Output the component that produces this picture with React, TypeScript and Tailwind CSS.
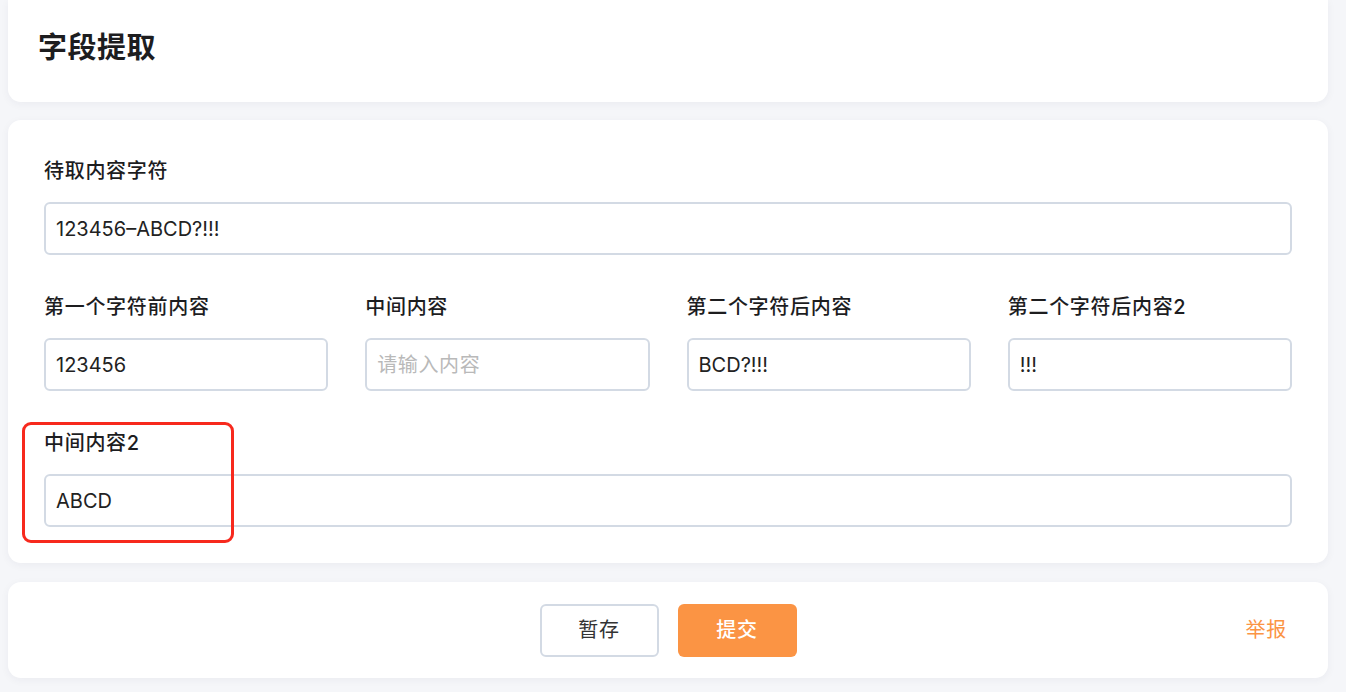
const FONT = "font-['Inter','Noto_Sans_CJK_SC',sans-serif]";

type Field = { label: string; value?: string; placeholder?: string };

const splitFields: Field[] = [
  { label: '第一个字符前内容', value: '123456' },
  { label: '中间内容', placeholder: '请输入内容' },
  { label: '第二个字符后内容', value: 'BCD?!!!' },
  { label: '第二个字符后内容2', value: '!!!' },
];

function FormField({ label, value, placeholder }: Field) {
  return (
    <div className="flex flex-col">
      <label className="h-[28px] text-[20px] leading-[28px] font-medium tracking-[0.7px] text-[#1d1d1f]">{label}</label>
      <input
        readOnly
        defaultValue={value}
        placeholder={placeholder}
        className="mt-[17px] h-[53px] w-full rounded-[6px] border-2 border-[#d3dae4] bg-white px-[10px] text-[20px] text-[#222] outline-none placeholder:tracking-[0.6px] placeholder:text-[#b9b9b9]"
      />
    </div>
  );
}

export default function App() {
  return (
    <div className={`${FONT} min-h-screen bg-[#f5f6f9] pr-[18px] pl-[8px] pb-[14px]`}>
      {/* Page header */}
      <div className="flex h-[102px] items-center rounded-b-[13px] bg-white px-[30px] pb-[6px] shadow-[0_2px_8px_rgba(30,40,70,0.05)]">
        <h1 className="text-[29px] font-semibold tracking-[0.5px] text-[#1d1d1f]">字段提取</h1>
      </div>

      {/* Extraction form */}
      <div className="relative mt-[18px] rounded-[13px] bg-white px-[36px] pt-[37px] pb-[36px] shadow-[0_2px_8px_rgba(30,40,70,0.05)]">
        <FormField label="待取内容字符" value="123456–ABCD?!!!" />

        <div className="mt-[38px] grid grid-cols-4 gap-x-[37px]">
          {splitFields.map((f) => (
            <FormField key={f.label} {...f} />
          ))}
        </div>

        <div className="mt-[38px]">
          <FormField label="中间内容2" value="ABCD" />
        </div>

        {/* highlight marker */}
        <div className="pointer-events-none absolute left-[14px] top-[302px] h-[121px] w-[212px] rounded-[9px] border-[3px] border-[#f7291d]" />
      </div>

      {/* Actions */}
      <div className="relative mt-[19px] flex h-[96px] items-center justify-center gap-[19px] rounded-[13px] bg-white shadow-[0_2px_8px_rgba(30,40,70,0.05)]">
        <button className="h-[53px] w-[119px] rounded-[6px] border-2 border-[#d3dae4] bg-white text-[20px] tracking-[0.7px] text-[#333]">
          暂存
        </button>
        <button className="h-[53px] w-[119px] rounded-[6px] bg-[#fb9444] text-[20px] font-medium tracking-[0.7px] text-white">
          提交
        </button>
        <a className="absolute right-[41px] text-[20px] tracking-[0.7px] text-[#fb9444]">举报</a>
      </div>
    </div>
  );
}
